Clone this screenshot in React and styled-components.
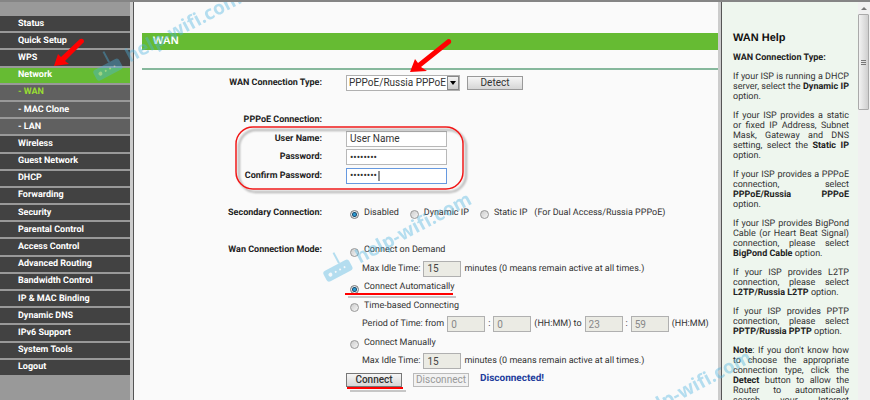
import React from "react";
import styled, { createGlobalStyle } from "styled-components";

const menu = [
  { label: "Status" },
  { label: "Quick Setup" },
  { label: "WPS" },
  { label: "Network", kind: "open" },
  { label: "- WAN", kind: "current" },
  { label: "- MAC Clone", kind: "sub" },
  { label: "- LAN", kind: "sub" },
  { label: "Wireless" },
  { label: "Guest Network" },
  { label: "DHCP" },
  { label: "Forwarding" },
  { label: "Security" },
  { label: "Parental Control" },
  { label: "Access Control" },
  { label: "Advanced Routing" },
  { label: "Bandwidth Control" },
  { label: "IP & MAC Binding" },
  { label: "Dynamic DNS" },
  { label: "IPv6 Support" },
  { label: "System Tools" },
  { label: "Logout" },
];

const menuColors = {
  open: "#66bb33",
  current: "#606060",
  sub: "#606060",
};

export default function App() {
  const [secondary, setSecondary] = React.useState("disabled");
  const [mode, setMode] = React.useState("auto");
  const [form, setForm] = React.useState({
    user: "User Name",
    password: "12345678",
    confirm: "12345678",
  });

  const onChange = (e) => {
    const { name, value } = e.target;
    setForm((form) => ({ ...form, [name]: value }));
  };
  const pickMode = (e) => setMode(e.target.value);
  const pickSecondary = (e) => setSecondary(e.target.value);

  return (
    <Page>
      <GlobalStyle />
      <Sidebar>
        <Menu>
          {menu.map(({ label, kind }) => (
            <MenuLink key={label} href="#" $kind={kind}>
              {label}
            </MenuLink>
          ))}
        </Menu>
      </Sidebar>
      <Divider />
      <Main>
        <Title>WAN</Title>
        <Rule />
        <Form>
          <Row>
            <Label htmlFor="type">WAN Connection Type:</Label>
            <Field>
              <SelectBox>
                <Select id="type">
                  <option>PPPoE/Russia PPPoE</option>
                </Select>
                <SelectArrow viewBox="0 0 10 12">
                  <path d="M2 4h6l-3 4z" />
                </SelectArrow>
              </SelectBox>
              <Button>Detect</Button>
            </Field>
          </Row>
          <Blank />
          <Row>
            <Label as="span">PPPoE Connection:</Label>
          </Row>
          <Row>
            <Label htmlFor="user">User Name:</Label>
            <Input id="user" name="user" value={form.user} onChange={onChange} />
          </Row>
          <Row>
            <Label htmlFor="password">Password:</Label>
            <Input id="password" name="password" type="password" value={form.password} onChange={onChange} />
          </Row>
          <Row>
            <Label htmlFor="confirm">Confirm Password:</Label>
            <Input id="confirm" name="confirm" type="password" $active value={form.confirm} onChange={onChange} />
          </Row>
          <Blank />
          <Row>
            <Label as="span">Secondary Connection:</Label>
            <Options>
              <Option>
                <Radio name="secondary" value="disabled" checked={secondary === "disabled"} onChange={pickSecondary} />
                Disabled
              </Option>
              <Option>
                <Radio name="secondary" value="dynamic" checked={secondary === "dynamic"} onChange={pickSecondary} />
                Dynamic IP
              </Option>
              <Field>
                <Option>
                  <Radio name="secondary" value="static" checked={secondary === "static"} onChange={pickSecondary} />
                  Static IP
                </Option>
                <span>(For Dual Access/Russia PPPoE)</span>
              </Field>
            </Options>
          </Row>
          <Blank />
          <Row>
            <Label as="span">Wan Connection Mode:</Label>
            <Options>
              <Option>
                <Radio name="mode" value="demand" checked={mode === "demand"} onChange={pickMode} />
                Connect on Demand
              </Option>
            </Options>
          </Row>
          <Row>
            <Label as="span" />
            <Detail>
              <label htmlFor="idle1">Max Idle Time:</label>
              <Small id="idle1" defaultValue="15" $dark disabled />
              <span>minutes (0 means remain active at all times.)</span>
            </Detail>
          </Row>
          <Row>
            <Label as="span" />
            <Options>
              <Option>
                <Radio name="mode" value="auto" checked={mode === "auto"} onChange={pickMode} />
                Connect Automatically
              </Option>
            </Options>
          </Row>
          <Row>
            <Label as="span" />
            <Options>
              <Option>
                <Radio name="mode" value="time" checked={mode === "time"} onChange={pickMode} />
                Time-based Connecting
              </Option>
            </Options>
          </Row>
          <Row>
            <Label as="span" />
            <Detail>
              <span>Period of Time: from</span>
              <Small aria-label="From hour" defaultValue="0" disabled />
              <span>:</span>
              <Small aria-label="From minute" defaultValue="0" disabled />
              <span>(HH:MM) to</span>
              <Small aria-label="To hour" defaultValue="23" disabled />
              <span>:</span>
              <Small aria-label="To minute" defaultValue="59" disabled />
              <span>(HH:MM)</span>
            </Detail>
          </Row>
          <Row>
            <Label as="span" />
            <Options>
              <Option>
                <Radio name="mode" value="manual" checked={mode === "manual"} onChange={pickMode} />
                Connect Manually
              </Option>
            </Options>
          </Row>
          <Row>
            <Label as="span" />
            <Detail>
              <label htmlFor="idle2">Max Idle Time:</label>
              <Small id="idle2" defaultValue="15" $dark disabled />
              <span>minutes (0 means remain active at all times.)</span>
            </Detail>
          </Row>
          <Row>
            <Label as="span" />
            <Actions>
              <Button $strong>Connect</Button>
              <Button disabled>Disconnect</Button>
              <State>Disconnected!</State>
            </Actions>
          </Row>
        </Form>
      </Main>
      <Divider />
      <Help>
        <HelpTitle>WAN Help</HelpTitle>
        <p><b>WAN Connection Type:</b></p>
        <p>If your ISP is running a DHCP server, select the <b>Dynamic IP</b> option.</p>
        <p>If your ISP provides a static or fixed IP Address, Subnet Mask, Gateway and DNS setting, select the <b>Static IP</b> option.</p>
        <p>If your ISP provides a PPPoE connection, select <b>PPPoE/Russia PPPoE</b> option.</p>
        <p>If your ISP provides BigPond Cable (or Heart Beat Signal) connection, please select <b>BigPond Cable</b> option.</p>
        <p>If your ISP provides L2TP connection, please select <b>L2TP/Russia L2TP</b> option.</p>
        <p>If your ISP provides PPTP connection, please select <b>PPTP/Russia PPTP</b> option.</p>
        <p><b>Note</b>: If you don't know how to choose the appropriate connection type, click the <b>Detect</b> button to allow the Router to automatically search your Internet connection.</p>
      </Help>
      <Scrollbar>
        <ScrollUp viewBox="0 0 12 12"><path d="M3 8l3-3 3 3z" /></ScrollUp>
        <Thumb>
          <Grip />
        </Thumb>
      </Scrollbar>
      <Overlay />
    </Page>
  );
}

// router silhouette followed by the site name, drawn along the x axis
function Watermark({ x, y }) {
  return (
    <g transform={`translate(${x} ${y}) rotate(-28)`} fill="#4db4e0" opacity="0.4">
      <rect x="0" y="-10" width="29" height="12" rx="3" />
      <rect x="18" y="-22" width="2" height="12" />
      <g fill="#eef6fa">
        <circle cx="6" cy="-4" r="2" />
        <circle cx="12" cy="-4" r="1" />
        <circle cx="17" cy="-4" r="1" />
        <circle cx="22" cy="-4" r="1" />
      </g>
      <text x="37" y="0" fontSize="19" fontWeight="700" fontFamily="'Open Sans', sans-serif">help-wifi.com</text>
    </g>
  );
}

function Overlay() {
  return (
    <Marks width="870" height="400" viewBox="0 0 870 400">
      <defs>
        <filter id="drop" x="-10%" y="-20%" width="120%" height="160%">
          <feDropShadow dx="3" dy="3" stdDeviation="1" floodOpacity="0.4" />
        </filter>
      </defs>
      <Watermark x={97} y={80} />
      <Watermark x={327} y={281} />
      <Watermark x={607} y={439} />
      <g fill="#f00">
        <path d="M54 66L58 54L61 57L80 39Q84 38 84 42L65 61L69 64Z" />
        <path d="M410 72L415 59L418 63L448 39Q452 39 451 43L421 67L427 71Z" />
      </g>
      <rect x="236" y="127" width="227" height="62" rx="17" fill="none" stroke="#f01818" strokeWidth="1.5" filter="url(#drop)" />
      <path d="M379 171v10" stroke="#222" />
      <path d="M348 297h108M350 391h56" stroke="#000" strokeWidth="2" opacity="0.2" />
      <path d="M345 294h108M347 388h56" stroke="#f00" strokeWidth="2" />
    </Marks>
  );
}

const GlobalStyle = createGlobalStyle`
  * {
    box-sizing: border-box;
  }
  body {
    margin: 0;
    background: #fafafa;
    color: #333;
    font: 9px/10px Roboto, "Liberation Sans", sans-serif;
    text-rendering: geometricPrecision;
  }
  b {
    color: #222;
  }
  input, select, button {
    margin: 0;
    font: 10px/12px Roboto, "Liberation Sans", sans-serif;
    color: #333;
  }
`;

const Page = styled.div`
  position: relative;
  display: flex;
  height: 100vh;
  overflow: hidden;
  border-top: 2px solid #858585;
`;

const Sidebar = styled.nav`
  flex: none;
  width: 130px;
  padding-top: 14px;
  background: #999;
`;

const Menu = styled.div`
  display: grid;
  grid-auto-rows: 1fr;
  gap: 2px;
  min-height: 359px;
`;

const MenuLink = styled.a`
  display: flex;
  align-items: center;
  padding-left: 18px;
  background: ${(p) => menuColors[p.$kind] || "#424242"};
  color: ${(p) => (p.$kind === "current" ? "#99dd33" : "#fff")};
  font-weight: bold;
  text-decoration: none;
`;

const Divider = styled.div`
  flex: none;
  width: 4px;
  background: #ccc;
  border-right: 1px solid #555;
`;

const Main = styled.main`
  flex: 1;
  min-width: 0;
  padding: 31px 0 0 8px;
  white-space: nowrap;
`;

const Title = styled.h1`
  margin: 0 0 18px;
  padding-left: 11px;
  background: #66bb33;
  color: #fff;
  font: bold 11px/17px "Liberation Sans", Arial, sans-serif;
`;

const Rule = styled.hr`
  height: 2px;
  margin: 0 0 4px;
  border: none;
  background: #86b89c;
`;

const Form = styled.form`
  display: grid;
  grid-auto-rows: 1fr;
  min-height: 315px;
`;

const Row = styled.div`
  display: flex;
  align-items: center;
  gap: 24px;
`;

const Blank = styled.div``;

const Label = styled.label`
  flex: none;
  width: 180px;
  color: #222;
  font-weight: bold;
  text-align: right;
`;

const Field = styled.div`
  display: flex;
  align-items: center;
  gap: 7px;
`;

const Options = styled(Field)`
  gap: 11px;
  padding-left: 4px;
`;

const Detail = styled(Field)`
  gap: 3px;
  padding-left: 16px;
`;

const Actions = styled(Field)`
  gap: 11px;
`;

const Option = styled.label`
  display: flex;
  align-items: center;
  gap: 5px;
`;

const Radio = styled.input.attrs({ type: "radio" })`
  appearance: none;
  width: 9px;
  height: 9px;
  margin-top: 4px;
  border: 1px solid #999;
  border-radius: 50%;
  background: linear-gradient(135deg, #ccc, #f6f6f6);

  &:checked {
    border-color: #777;
    background: radial-gradient(#2b9ad0 0 1px, #174a70 2px, #e4e8ea 3px);
  }
`;

const Input = styled.input`
  width: 101px;
  height: 16px;
  padding: 0 3px;
  border: 1px solid ${(p) => (p.$active ? "#6699e0" : "#b8b8b8")};
  background: #fff;
  outline: none;
`;

const Small = styled.input`
  width: 38px;
  height: 16px;
  padding: 0 3px;
  border: 1px solid #b0b0b0;
  background: #ebebe4;
  color: ${(p) => (p.$dark ? "#444" : "#888")};
`;

const SelectBox = styled.div`
  display: flex;
  align-items: center;
  width: 114px;
  height: 16px;
  border: 1px solid #b0b0b0;
  background: #fff;
`;

const Select = styled.select`
  appearance: none;
  flex: 1;
  min-width: 0;
  height: 14px;
  padding: 0 0 0 2px;
  border: none;
  background: none;
`;

const SelectArrow = styled.svg`
  flex: none;
  width: 12px;
  height: 14px;
  border: 1px solid #888;
  background: linear-gradient(#f4f4f4, #ccc);
`;

const Button = styled.button.attrs({ type: "button" })`
  width: 56px;
  height: 14px;
  padding: 0;
  border: 1px solid ${(p) => (p.$strong ? "#777" : "#999")};
  background: linear-gradient(#f6f6f6, #d6d6d6);
  font-weight: ${(p) => (p.$strong ? 500 : 400)};
  text-align: center;

  &:disabled {
    border-color: #bbb;
    background: #f2f2f2;
    color: #999;
  }
`;

const State = styled.b`
  padding-bottom: 2px;
  color: #223c9c;
  font-size: 10px;
`;

const Help = styled.aside`
  flex: none;
  width: 136px;
  padding: 29px 9px 0 11px;
  background: #eef6ee;
  text-align: justify;

  p {
    margin: 0 0 9px;
  }
`;

const HelpTitle = styled.h2`
  margin: 0 0 8px;
  color: #111;
  font: bold 11px/14px "Liberation Sans", Arial, sans-serif;
`;

const Scrollbar = styled.div`
  flex: none;
  width: 12px;
  background: #f0f0f0;
`;

const ScrollUp = styled.svg`
  display: block;
  width: 12px;
  height: 12px;
  fill: #777;
`;

const Thumb = styled.div`
  display: grid;
  place-items: center;
  width: 11px;
  height: 96px;
  border: 1px solid #aaa;
  border-radius: 1px;
  background: linear-gradient(90deg, #f2f2f2, #cfcfcf);
`;

const Grip = styled.div`
  width: 5px;
  height: 5px;
  border: solid #777;
  border-width: 1px 0;
  background: linear-gradient(transparent 1px, #777 1px 2px, transparent 2px);
`;

const Marks = styled.svg`
  position: absolute;
  top: -2px;
  left: 0;
  pointer-events: none;
`;
